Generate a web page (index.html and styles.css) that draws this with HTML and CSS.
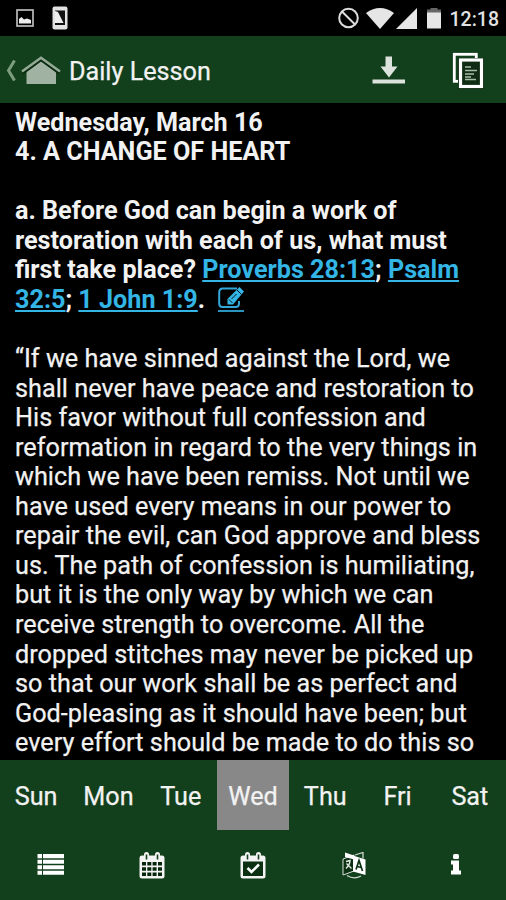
FILE: index.html
```html
<!DOCTYPE html>
<html lang="en">
<head>
  <meta charset="UTF-8" />
  <title>Daily Lesson</title>
  <meta name="viewport" content="width=device-width, initial-scale=1.0" />
  <link rel="stylesheet" href="styles.css">
</head>
<body>
  <div class="status-bar">
    <svg class="status-picture" width="18" height="18" viewBox="0 0 18 18">
      <rect x="1" y="1" width="16" height="16" fill="none" stroke="#bbb" stroke-width="1.7" />
      <path d="M3 14.5V10l2.500-2 2.500 2.500 3-1 4 1.500V14.500z" fill="#eee" />
    </svg>
    <svg class="status-phone" width="16" height="24" viewBox="0 0 16 24">
      <rect x="0.500" y="0.500" width="15" height="23" rx="2" fill="#e2e2e2" />
      <rect x="3" y="4.500" width="10" height="14.500" fill="#111" />
      <path d="M3 5l3 1 5.500 11H3z" fill="#eee" />
    </svg>
    <svg class="status-none" width="22" height="22" viewBox="0 0 22 22" fill="none" stroke="#ddd" stroke-width="2">
      <circle cx="10.500" cy="11" r="9.300" />
      <path d="M4 4.500l13 13" />
    </svg>
    <svg class="status-wifi" width="28" height="21" viewBox="0 0 28 21">
      <path d="M0 5Q14-5 28 5L14 21z" fill="#e6e6e6" />
    </svg>
    <svg class="status-signal" width="21" height="21" viewBox="0 0 21 21">
      <path d="M21 0v21H0z" fill="#e6e6e6" />
    </svg>
    <svg class="status-battery" width="14" height="22" viewBox="0 0 14 22">
      <path d="M0 2.500h3.500V1h7v1.500H14V6H0z" fill="#666" />
      <path d="M0 5.500h14v16H0z" fill="#e6e6e6" />
    </svg>
    <span class="clock">12:18</span>
  </div>

  <div class="header">
    <svg class="back" width="10" height="22" viewBox="0 0 10 22">
      <path d="M8.500 .5L2.500 10.500l6 10" fill="none" stroke="#7d9d80" stroke-width="3" />
    </svg>
    <svg class="home" width="40" height="29" viewBox="0 0 40 29">
      <path d="M5.500 15.500L20 5 35 15.500V28H5.500z" fill="#a0b2a1" />
      <path d="M1.500 17.500L20 4l18.500 13.500" fill="none" stroke="#0a2a10" stroke-width="2.500" />
      <path d="M1 15.500L20 1.800 39 15.500" fill="none" stroke="#94aa95" stroke-width="2.600" />
    </svg>
    <h1 class="title">Daily Lesson</h1>
    <svg class="download" width="34" height="29" viewBox="0 0 34 29" fill="#dce3dc">
      <path d="M13.500 .5h6.500v10h5.500L17 21.500 8.500 10.500h5z" />
      <rect x="0.500" y="23.500" width="32.500" height="4" />
    </svg>
    <svg class="pages" width="32" height="37" viewBox="0 0 32 37">
      <rect x="2.300" y="2.300" width="22" height="27" fill="none" stroke="#fff" stroke-width="2.800" />
      <rect x="6" y="6" width="26" height="31" fill="#0a250d" />
      <rect x="8.500" y="8" width="21" height="26.500" fill="#102d13" stroke="#fff" stroke-width="3.200" />
      <path d="M13 15h6M13 18.500h12M13 22h9M13 25h6M13 27.500h11" fill="none" stroke="#a8bda9" stroke-width="1.500" />
    </svg>
  </div>

  <div class="lesson">
    <p class="question">Wednesday, March 16<br>4. A CHANGE OF HEART</p>
    <p class="question">a. Before God can begin a work of restoration with each of us, what must first take place? <a href="#">Proverbs 28:13</a>; <a href="#">Psalm 32:5</a>; <a href="#">1 John 1:9</a>.&nbsp; <a class="note" href="#"><svg width="26" height="23" viewBox="0 0 26 23">
      <path d="M19 1.500H4.500Q1.200 1.500 1.200 5v11.500Q1.200 20 4.500 20h13Q21 20 21 16.500V14" fill="none" stroke="#33a6d8" stroke-width="2" />
      <path d="M21.500 0l4.500 4.500L15 17.500H9.500V12z" fill="#33b5e5" />
      <path d="M19 3l4.500 4.500M11 12.500l3.500 3.500M13.500 12l5-5" fill="none" stroke="#000" stroke-width="0.900" />
    </svg></a></p>
    <p>“If we have sinned against the Lord, we shall never have peace and restoration to His favor without full confession and reformation in regard to the very things in which we have been remiss. Not until we have used every means in our power to repair the evil, can God approve and bless us. The path of confession is humiliating, but it is the only way by which we can receive strength to overcome. All the dropped stitches may never be picked up so that our work shall be as perfect and God-pleasing as it should have been; but every effort should be made to do this so</p>
  </div>

  <div class="days">
    <span class="day">Sun</span>
    <span class="day">Mon</span>
    <span class="day">Tue</span>
    <span class="day active">Wed</span>
    <span class="day">Thu</span>
    <span class="day">Fri</span>
    <span class="day">Sat</span>
  </div>

  <div class="toolbar">
    <div class="tool">
      <svg width="27" height="27" viewBox="0 0 27 27" fill="#fff">
        <path d="M.5 2h4.500v4.300H.5zM6 2h21v4.300H6zM.5 7.800h4.500v4H.5zM6 7.800h21v4H6zM.5 13.300h4.500v4H.5zM6 13.300h21v4H6zM.5 18.800h4.500v4H.5zM6 18.800h21v4H6z" />
      </svg>
    </div>
    <div class="tool">
      <svg width="26" height="27" viewBox="0 0 26 27">
        <rect x="0.500" y="3.500" width="25" height="23" rx="2.500" fill="#f4f4f4" />
        <rect x="5" y="0" width="5" height="8" rx="2.500" fill="#f4f4f4" />
        <rect x="16" y="0" width="5" height="8" rx="2.500" fill="#f4f4f4" />
        <path d="M7.500 2.500v5M18.500 2.500v5" stroke="#123f1c" stroke-width="1.600" />
        <path d="M3 10h4v3.500H3zM8.300 10h4v3.500h-4zM13.600 10h4v3.500h-4zM19 10h4v3.500h-4zM3 15.200h4v3.500H3zM8.300 15.200h4v3.500h-4zM13.600 15.200h4v3.500h-4zM19 15.200h4v3.500h-4zM3 20.500h4V24H3zM8.300 20.500h4V24h-4zM13.600 20.500h4V24h-4zM19 20.500h4V24h-4z" fill="#06270d" />
      </svg>
    </div>
    <div class="tool">
      <svg width="26" height="27" viewBox="0 0 26 27">
        <rect x="0.500" y="3.500" width="25" height="23" rx="2.500" fill="#f4f4f4" />
        <rect x="5" y="0" width="5" height="8" rx="2.500" fill="#f4f4f4" />
        <rect x="16" y="0" width="5" height="8" rx="2.500" fill="#f4f4f4" />
        <path d="M7.500 2.500v5M18.500 2.500v5" stroke="#123f1c" stroke-width="1.600" />
        <rect x="3" y="9.500" width="20" height="14.500" fill="#0b3012" />
        <path d="M7.500 16l4 4 7.500-7.500" fill="none" stroke="#fff" stroke-width="2.600" />
      </svg>
    </div>
    <div class="tool">
      <svg width="24" height="27" viewBox="0 0 24 27">
        <path d="M1 7l11-4v16L1 23z" fill="#0b3012" stroke="#d8e0d8" stroke-width="1" />
        <path d="M3 .5l9 3v4L3 5z" fill="#fff" />
        <path d="M11 3.500l12.500 4v15.500L11 19.500z" fill="#fff" />
        <path d="M13 3l8-2.500v6M5 23.500q7 4.500 14 .5" fill="none" stroke="#cbd6cc" stroke-width="1.300" />
        <path d="M4 9.500l4-1q0 4-4 8M4.500 11.500l5 5" fill="none" stroke="#dfe6df" stroke-width="1.400" />
        <path d="M14 17.500l3-9 3.500 10.500M15 14.500l4.500 1" fill="none" stroke="#0b3012" stroke-width="1.700" />
      </svg>
    </div>
    <div class="tool">
      <svg class="info" width="12" height="27" viewBox="0 0 12 27" fill="#fff">
        <rect x="3" y="2" width="6" height="5" rx="1.500" />
        <path d="M1 8.500h8v10h2v4H1v-4h2v-6H1z" />
      </svg>
    </div>
  </div>
</body>
</html>
```
FILE: styles.css
```css
* {
  box-sizing: border-box;
}

body {
  display: flex;
  flex-direction: column;
  height: 900px;
  margin: 0;
  overflow: hidden;
  font-family: Roboto, sans-serif;
  background: #000;
  color: #f2f2f2;
}

svg {
  display: block;
  flex: none;
}

.status-bar {
  display: flex;
  align-items: center;
  height: 36px;
  padding: 0 7px 0 16px;
}

.status-phone {
  margin-left: 18px;
}

.status-none {
  margin-left: auto;
}

.status-wifi {
  margin-left: 6px;
}

.status-signal {
  margin-left: 2px;
}

.status-battery {
  margin-left: 10px;
}

.clock {
  margin-left: 9px;
  padding-top: 2px;
  font-size: 19.5px;
  font-weight: 500;
  color: #e2e2e2;
}

.header {
  display: flex;
  align-items: center;
  height: 67px;
  padding: 2px 22px 0 6px;
  background: #123f1c;
}

.home {
  margin-left: 5px;
}

.title {
  margin: 0 0 0 8px;
  padding-top: 1px;
  font-size: 25.2px;
  font-weight: 400;
  -webkit-text-stroke: 0.25px #f2f2f2;
}

.download {
  margin-left: auto;
}

.pages {
  margin-left: 46px;
}

.lesson {
  flex: 1;
  padding: 4.5px 15px 0;
  overflow: hidden;
  font-size: 25.2px;
  line-height: 29.56px;
  letter-spacing: 0.035px;
  -webkit-text-stroke: 0.25px #f2f2f2;
}

.lesson p {
  margin: 0 0 29.56px;
}

.lesson .question {
  font-weight: 700;
  letter-spacing: 0;
  -webkit-text-stroke: 0;
}

.lesson a {
  color: #33b5e5;
}

.lesson .note {
  display: inline-block;
  height: 25px;
  border-bottom: 2px solid #2a94bc;
  vertical-align: -4px;
}

.days {
  display: flex;
  height: 70px;
  background: #123f1c;
}

.day {
  flex: 1;
  font-size: 25.2px;
  line-height: 74px;
  text-align: center;
  -webkit-text-stroke: 0.25px #f2f2f2;
}

.day.active {
  background: #888;
}

.toolbar {
  display: flex;
  height: 70px;
  background: #123f1c;
}

.tool {
  display: flex;
  flex: 1;
  align-items: center;
  justify-content: center;
}

.info {
  margin-left: 2px;
}
```
